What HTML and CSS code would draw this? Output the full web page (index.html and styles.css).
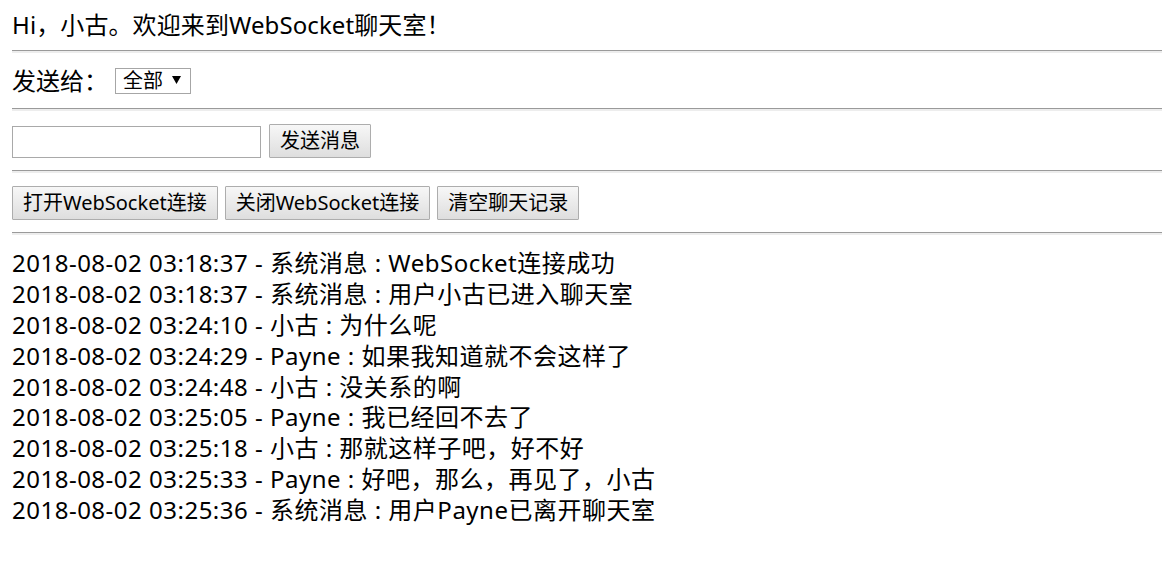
FILE: index.html
```html
<!DOCTYPE html>
<html lang="zh-CN">
<head>
<meta charset="utf-8">
<title>WebSocket聊天室</title>
<link rel="stylesheet" href="styles.css">
</head>
<body>
<div class="page">
  <div class="row row-title">Hi，小古。欢迎来到WebSocket聊天室！</div>
  <div class="rule"></div>
  <div class="row row-to">
    <span class="label">发送给：</span>
    <span class="select"><span class="select-text">全部</span><svg class="arrow" width="9" height="8" viewBox="0 0 9 8"><path d="M0 0H9L4.5 8Z" fill="#000"/></svg></span>
  </div>
  <div class="rule"></div>
  <div class="row row-send">
    <input class="text-input" type="text">
    <button class="btn btn-send">发送消息</button>
  </div>
  <div class="rule"></div>
  <div class="row row-actions">
    <button class="btn">打开WebSocket连接</button>
    <button class="btn">关闭WebSocket连接</button>
    <button class="btn">清空聊天记录</button>
  </div>
  <div class="rule"></div>
  <div class="log">
    <div class="line">2018-08-02 03:18:37 - 系统消息 : WebSocket连接成功</div>
    <div class="line">2018-08-02 03:18:37 - 系统消息 : 用户小古已进入聊天室</div>
    <div class="line">2018-08-02 03:24:10 - 小古 : 为什么呢</div>
    <div class="line">2018-08-02 03:24:29 - Payne : 如果我知道就不会这样了</div>
    <div class="line">2018-08-02 03:24:48 - 小古 : 没关系的啊</div>
    <div class="line">2018-08-02 03:25:05 - Payne : 我已经回不去了</div>
    <div class="line">2018-08-02 03:25:18 - 小古 : 那就这样子吧，好不好</div>
    <div class="line">2018-08-02 03:25:33 - Payne : 好吧，那么，再见了，小古</div>
    <div class="line">2018-08-02 03:25:36 - 系统消息 : 用户Payne已离开聊天室</div>
  </div>
</div>
</body>
</html>
```
FILE: styles.css
```css
html, body {
  margin: 0;
  padding: 0;
  background: #fff;
}
body {
  font-family: "Noto Sans", "Noto Sans CJK SC", sans-serif;
  font-size: 24px;
  color: #000;
}
.page {
  padding-left: 12px;
  display: flex;
  flex-direction: column;
}
.row {
  display: flex;
  align-items: center;
  white-space: nowrap;
}
.row-title {
  height: 50px;
  line-height: 32px;
  letter-spacing: 0.1px;
}
.row-to {
  height: 55px;
}
.row-send {
  height: 59px;
  gap: 8px;
}
.row-actions {
  height: 59px;
  gap: 7px;
}
.rule {
  height: 0;
  border-top: 1px solid #9a9a9a;
  border-bottom: 2px solid #ededed;
}
.label {
  line-height: 26px;
}
.select {
  margin-left: 7px;
  box-sizing: border-box;
  width: 76px;
  height: 26px;
  border: 1px solid #a6a6a6;
  display: flex;
  align-items: center;
  padding-left: 7px;
  font-size: 20px;
  background: #fff;
}
.select-text {
  line-height: 24px;
}
.arrow {
  margin-left: 9px;
  margin-top: -2px;
}
.text-input {
  box-sizing: border-box;
  width: 249px;
  height: 32px;
  margin: 2px 0 0 0;
  border: 1px solid #a9a9a9;
  padding: 0 4px;
  font-size: 20px;
  font-family: inherit;
  background: #fff;
  outline: none;
}
.btn {
  box-sizing: border-box;
  height: 34px;
  margin: 0;
  padding: 0 10px;
  border: 1px solid #adadad;
  border-radius: 1px;
  background: linear-gradient(#f7f7f7, #dedede);
  font-family: "Noto Sans", "Noto Sans CJK SC", sans-serif;
  font-size: 20px;
  line-height: 30px;
  color: #000;
}
.btn-send {
  width: 102px;
}
.log {
  padding-top: 13px;
  letter-spacing: 0.5px;
}
.line {
  height: 30.9px;
  line-height: 30.9px;
  white-space: nowrap;
}
```
